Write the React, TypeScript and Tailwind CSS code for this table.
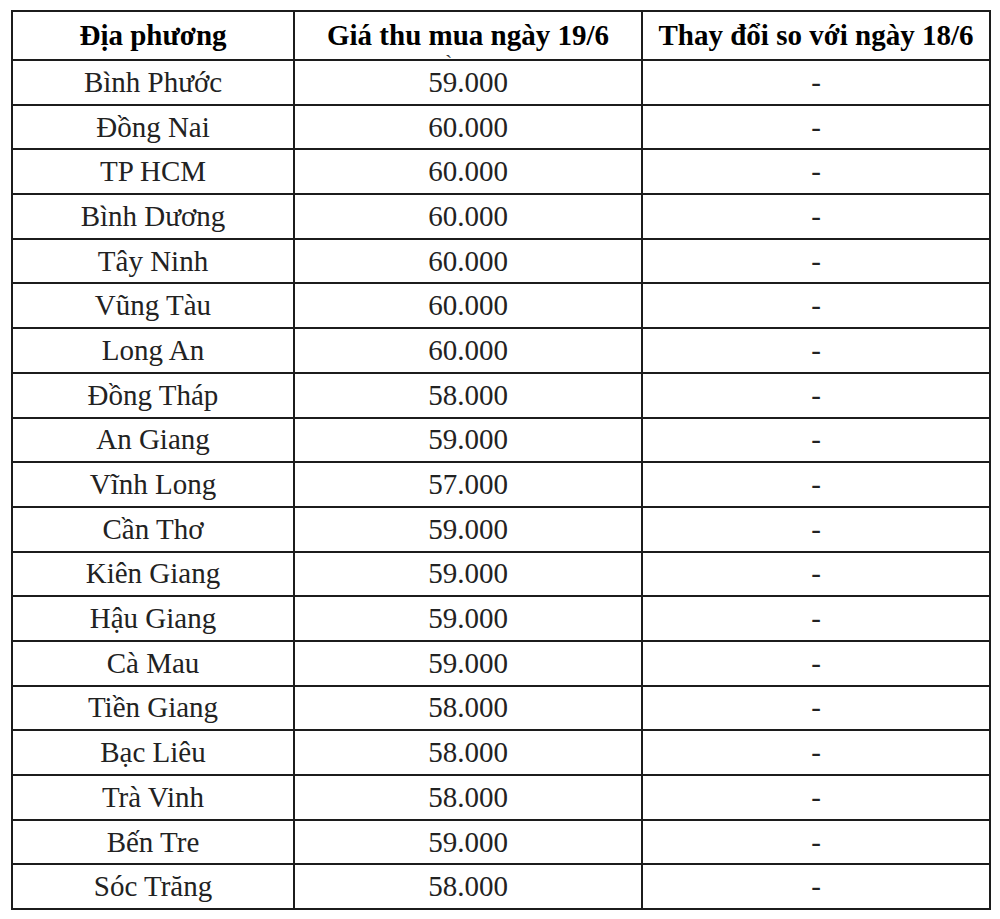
import React from "react";

const rows: [string, string][] = [
  ["Bình Phước", "59.000"],
  ["Đồng Nai", "60.000"],
  ["TP HCM", "60.000"],
  ["Bình Dương", "60.000"],
  ["Tây Ninh", "60.000"],
  ["Vũng Tàu", "60.000"],
  ["Long An", "60.000"],
  ["Đồng Tháp", "58.000"],
  ["An Giang", "59.000"],
  ["Vĩnh Long", "57.000"],
  ["Cần Thơ", "59.000"],
  ["Kiên Giang", "59.000"],
  ["Hậu Giang", "59.000"],
  ["Cà Mau", "59.000"],
  ["Tiền Giang", "58.000"],
  ["Bạc Liêu", "58.000"],
  ["Trà Vinh", "58.000"],
  ["Bến Tre", "59.000"],
  ["Sóc Trăng", "58.000"],
];

export default function App() {
  return (
    <div className="w-[1000px] h-[919px] bg-white pl-[11px] pt-[10px] font-['Liberation_Serif','Times_New_Roman',serif]">
      <table className="w-[978px] border-collapse table-fixed">
        <colgroup>
          <col className="w-[282px]" />
          <col className="w-[348px]" />
          <col className="w-[348px]" />
        </colgroup>
        <thead>
          <tr className="h-[49px]">
            <th className="border-2 border-[#1c1c1c] text-[29px] font-bold text-black text-center align-middle p-0 leading-none">
              Địa phương
            </th>
            <th className="relative border-2 border-[#1c1c1c] text-[29px] font-bold text-black text-center align-middle p-0 leading-none">
              Giá thu mua ngày 19/6
              <span className="absolute left-[150px] top-[40px] text-[22px] font-normal text-[#333] leading-none">`</span>
            </th>
            <th className="border-2 border-[#1c1c1c] text-[29px] font-bold text-black text-center align-middle p-0 leading-none">
              Thay đổi so với ngày 18/6
            </th>
          </tr>
        </thead>
        <tbody>
          {rows.map(([name, price]) => (
            <tr key={name} className="h-[44.7px]">
              <td className="border-2 border-[#1c1c1c] text-[29px] text-[#222] text-center align-middle p-0 leading-none">
                {name}
              </td>
              <td className="border-2 border-[#1c1c1c] text-[29px] text-[#222] text-center align-middle p-0 leading-none">
                {price}
              </td>
              <td className="border-2 border-[#1c1c1c] text-[29px] text-[#222] text-center align-middle p-0 leading-none">
                -
              </td>
            </tr>
          ))}
        </tbody>
      </table>
    </div>
  );
}
